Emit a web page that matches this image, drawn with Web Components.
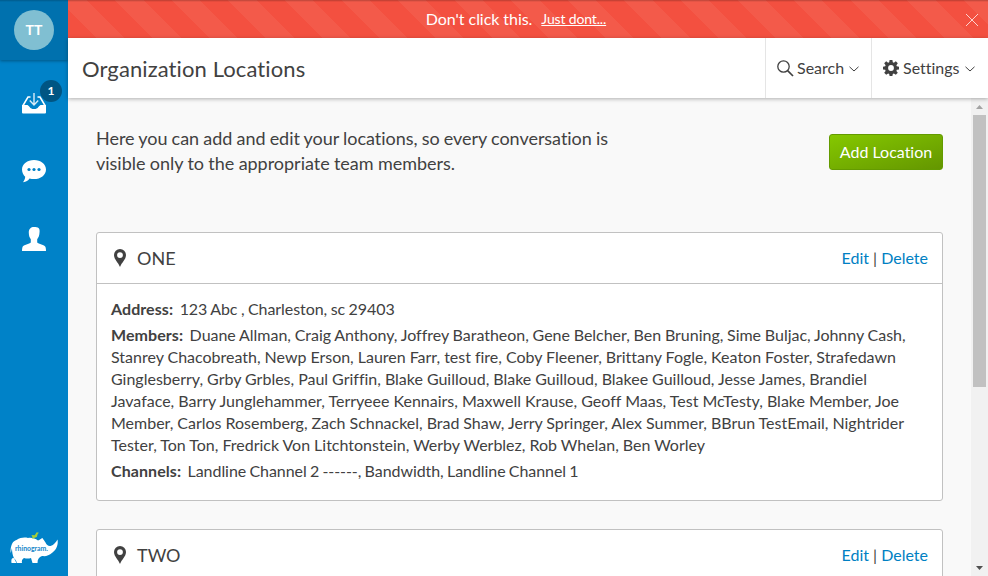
<!DOCTYPE html>
<html lang="en">
<head>
<meta charset="utf-8">
<title>Organization Locations</title>
<style>
html,body{margin:0;height:100%;overflow:hidden}
body{font-family:Lato,"Liberation Sans",sans-serif;color:#414141;font-size:16px;font-variant-ligatures:none}
</style>
</head>
<body>
<app-shell>
  <side-nav slot="nav" initials="TT"></side-nav>
  <alert-banner slot="banner">Don't click this.<a slot="link">Just dont...</a></alert-banner>
  <page-header slot="header" heading="Organization Locations">
    <header-action label="Search" icon="search"></header-action>
    <header-action label="Settings" icon="gear"></header-action>
  </page-header>
  <page-intro><text-line width="512">Here you can add and edit your locations, so every conversation is</text-line><text-line width="359">visible only to the appropriate team members.</text-line></page-intro>
  <location-card name="ONE">
    <detail-row label="Address:"><text-line width="215">123 Abc , Charleston, sc 29403</text-line></detail-row>
    <detail-row label="Members:"><text-line width="716">Duane Allman, Craig Anthony, Joffrey Baratheon, Gene Belcher, Ben Bruning, Sime Buljac, Johnny Cash,</text-line><br><text-line width="785">Stanrey Chacobreath, Newp Erson, Lauren Farr, test fire, Coby Fleener, Brittany Fogle, Keaton Foster, Strafedawn</text-line><br><text-line width="756">Ginglesberry, Grby Grbles, Paul Griffin, Blake Guilloud, Blake Guilloud, Blakee Guilloud, Jesse James, Brandiel</text-line><br><text-line width="788">Javaface, Barry Junglehammer, Terryeee Kennairs, Maxwell Krause, Geoff Maas, Test McTesty, Blake Member, Joe</text-line><br><text-line width="793">Member, Carlos Rosemberg, Zach Schnackel, Brad Shaw, Jerry Springer, Alex Summer, BBrun TestEmail, Nightrider</text-line><br><text-line width="594">Tester, Ton Ton, Fredrick Von Litchtonstein, Werby Werblez, Rob Whelan, Ben Worley</text-line></detail-row>
    <detail-row label="Channels:"><text-line width="391">Landline Channel 2 ------, Bandwidth, Landline Channel 1</text-line></detail-row>
  </location-card>
  <location-card name="TWO"></location-card>
</app-shell>
<script>
const define = (tag, html) => customElements.define(tag, class extends HTMLElement {
  constructor() {
    super();
    this.attachShadow({ mode: 'open' }).innerHTML = typeof html === 'function' ? html(this) : html;
  }
});

const icons = {
  search: `<svg width="17" height="17" viewBox="0 0 17 17" fill="none" stroke="#414141"><circle cx="6.5" cy="6.5" r="5.7" stroke-width="1.3"/><path d="M10.6 10.6L16 16" stroke-width="1.7"/></svg>`,
  gear: `<svg width="16" height="16" viewBox="0 0 16 16"><path fill="#414141" fill-rule="evenodd" d="M6.6 0h2.800l.4 2.200 1.100.5 1.900-1.400 2 2-1.400 1.900.4 1.100 2.200.4v2.700l-2.200.4-.4 1.100 1.400 1.900-2 2-1.900-1.400-1.100.5-.4 2.100H6.600l-.4-2.100-1.100-.5-1.900 1.400-2-2 1.400-1.900-.4-1.100L0 9.400V6.700l2.200-.4.4-1.100-1.400-1.900 2-2 1.900 1.400 1.100-.5zM8 5.100a2.900 2.900 0 1 0 0 5.800a2.900 2.900 0 1 0 0-5.800z"/></svg>`
};

define('scroll-rail', `
<style>
:host{display:flex;flex-direction:column;align-items:center;width:17px;background:#f1f1f1}
.arrow{height:17px;display:flex;align-items:center}
.thumb{width:13px;height:272px;background:#c1c1c1}
.space{flex:1}
svg{display:block}
</style>
<div class="arrow"><svg width="7" height="4"><path d="M0 4L3.5 0L7 4z" fill="#a3a3a3"/></svg></div>
<div class="thumb"></div><div class="space"></div>
<div class="arrow"><svg width="7" height="4"><path d="M0 0L3.5 4L7 0z" fill="#505050"/></svg></div>`);

define('app-shell', `
<style>
:host{display:grid;grid-template-columns:68px 920px;width:988px;height:576px;overflow:hidden}
.main{display:grid;grid-template-rows:38px 60px 478px;min-width:0}
.header{display:grid;z-index:1}
.view{display:grid;grid-template-columns:903px 17px;background:#f9f9f9;overflow:hidden}
.content{padding:28px 28px 0;overflow:hidden}
</style>
<slot name="nav"></slot>
<div class="main"><slot name="banner"></slot><div class="header"><slot name="header"></slot></div>
<div class="view"><div class="content"><slot></slot></div><scroll-rail></scroll-rail></div></div>`);

define('side-nav', el => `
<style>
:host{display:flex;flex-direction:column;background:#0082c8;height:576px}
.user{height:60px;background:linear-gradient(rgba(0,0,0,.2),rgba(0,0,0,0) 2px),#0071ae;box-shadow:0 1px 3px rgba(0,0,0,.35);display:flex;justify-content:center;align-items:center;box-sizing:border-box}
.avatar{width:40px;height:40px;border-radius:50%;background:#80bfd2;color:#fff;font-size:14px;font-weight:bold;line-height:39px;text-align:center}
.item{box-sizing:border-box;height:68px;display:flex;justify-content:center;position:relative}
.inbox{padding-top:33px}
.chat{padding-top:32px}
.people{padding-top:31px}
.badge{position:absolute;left:40px;top:20px;width:22px;height:22px;border-radius:50%;background:#005583;color:#fff;font-size:12px;font-weight:bold;line-height:22px;text-align:center}
.logo{margin-top:auto;padding:0 0 11px 9px}
svg{display:block}
</style>
<div class="user"><div class="avatar">${el.getAttribute('initials')}</div></div>
<div class="item inbox"><svg width="24" height="21" viewBox="0 0 24 21"><path d="M8.500 4H6L1 12.500M15.500 4H18L23 12.500" fill="none" stroke="#fff" stroke-width="1.500"/><path d="M0 12h5.500l1.500 1.300q1.500 2.700 3.500 2.700h3q2 0 3.500-2.700l1.500-1.300H24v7.500q0 1-1 1H1q-1 0-1-1z" fill="#fff"/><path d="M12 0v11.500M7.800 7.500L12 12l4.200-4.500" fill="none" stroke="#fff" stroke-opacity=".85" stroke-width="1.400"/></svg><span class="badge">1</span></div>
<div class="item chat"><svg width="24" height="23" viewBox="0 0 24 23"><path d="M12 0C5.400 0 0 4 0 9.500c0 3.400 1.600 5.800 3.200 7.300-.2 2.400-1 4-2.200 5.400 3.200-.2 5.200-1.600 6.500-3.600 1.400.4 2.900.5 4.500.5 6.600 0 12-4 12-9.600S18.600 0 12 0z" fill="#fff"/><g fill="#0082c8"><circle cx="7" cy="9.500" r="1.600"/><circle cx="12" cy="9.500" r="1.600"/><circle cx="17" cy="9.500" r="1.600"/></g></svg></div>
<div class="item people"><svg width="24" height="24" viewBox="0 0 24 24"><path d="M12 0c4 0 6.300 1 5.500 5.800-.2 3-.9 4.700-2.300 6.400v3.300c1.200 1.700 7.500 2 8.300 4.500.4 1.200.5 2.500.5 4H0c0-1.500.1-2.800.5-4 .8-2.500 7.100-2.800 8.300-4.500v-3.300C7.400 10.500 6.900 8.800 6.800 5.800 6.600 1.800 9 0 12 0z" fill="#fff"/></svg></div>
<div class="logo"><svg width="50" height="34" viewBox="0 0 50 34"><path d="M1.500 20C2 13 4 10 7.500 9c4-2.500 8-3 11.500-2 4-.5 7 .5 10 2.500 1.800-.2 3-2 4.500-2.500.5 1.500 2 2.500 3 4.500 1 2.500 3 4 5 3.500 3.500-1 5.500-4 7-6.500 1 5-1 10-5 13-4 3.500-7 4-10.500 3.500-3 1-4.500 3-4.500 7h-5l-1.500-5c-3 1-5 .5-7 0-2 1-2.500 3-2 5h-5c-1-3-2.500-5-4-5s-2 2.500-1.500 5H7.500c-2-4-4.500-7-4.500-15L1.800 22z" fill="#fff"/><path d="M22.500 4l3.200.2 2-3L30 1.700l-1.300 1.200-.9 3-2.800 1-1.500 1-.2-2z" fill="#a4ce39"/><text x="6" y="19.500" font-size="7.500" font-weight="bold" textLength="33" lengthAdjust="spacingAndGlyphs" fill="#1686c9" font-family="Lato">rhinogram.</text></svg></div>`);

define('alert-banner', `
<style>
:host{display:grid;grid-template-columns:32px 1fr 23px;align-items:center;height:38px;color:#fff;background:linear-gradient(rgba(0,0,0,.24),rgba(0,0,0,0) 2px),repeating-linear-gradient(45deg,#f35040 0 20px,#f35a4a 20px 40px)}
p{grid-column:2;margin:0;padding-right:33px;text-align:center;line-height:38px;letter-spacing:-.05px}
::slotted(a){font-size:14px;text-decoration:underline;margin-left:9px;letter-spacing:-.15px;position:relative;top:-1px}
svg{display:block}
</style>
<p><slot></slot><slot name="link"></slot></p><svg width="14" height="14" viewBox="0 0 14 14"><path d="M1 1l12 12M13 1L1 13" stroke="#fff" stroke-opacity=".75"/></svg>`);

define('page-header', el => `
<style>
:host{display:flex;background:#fff;height:60px;box-shadow:0 1px 4px rgba(0,0,0,.3)}
h1{font-size:22px;font-weight:400;line-height:62px;margin:0 auto 0 14px;letter-spacing:.1px}
</style>
<h1>${el.getAttribute('heading')}</h1><slot></slot>`);

define('header-action', el => `
<style>
:host{display:flex;align-items:center;box-sizing:border-box;border-left:1px solid #e5e5e5;padding:0 12px 0 11px}
:host([icon=search]){width:106px}
:host([icon=gear]){width:117px}
span{margin:0 auto 0 4px;line-height:60px}
:host([icon=search]) span{margin-left:3px}
svg{display:block;flex:none}
.chevron{margin-top:2px}
:host([icon=gear]) .chevron{margin-right:1px}
</style>
${icons[el.getAttribute('icon')]}<span>${el.getAttribute('label')}</span><svg class="chevron" width="10" height="6" viewBox="0 0 10 6"><path d="M.5 .8L5 5L9.500 .8" fill="none" stroke="#414141"/></svg>`);

define('page-intro', `
<style>
:host{display:flex;justify-content:space-between;align-items:flex-start;height:106px}
p{font-size:18px;line-height:25px;margin:0;display:flex;flex-direction:column}
button{font:inherit;color:#fff;height:36px;width:114px;padding:0 0 2px;margin-top:8px;border:1px solid #649b00;border-radius:3px;background:linear-gradient(to bottom right,#85c800,#649600)}
</style>
<p><slot></slot></p><button>Add Location</button>`);

define('location-card', el => `
<style>
:host{display:block;box-sizing:border-box;height:269px;border:1px solid #c1c1c1;border-radius:3px;background:#fff;margin-bottom:28px}
header{display:flex;align-items:center;height:50px;border-bottom:1px solid #c1c1c1;padding:0 14px 0 17px}
h2{font-size:18px;font-weight:400;line-height:50px;margin:0 auto 0 11px}
a{color:#0080c3}
.links{white-space:pre;padding-bottom:2px}
.body{padding:14px 14px 0}
svg{display:block}
</style>
<header><svg width="12" height="18" viewBox="0 0 12 18"><path fill="#414141" fill-rule="evenodd" d="M6 0a6 6 0 0 0-6 6c0 4.500 4.300 7.500 6 12 1.700-4.500 6-7.500 6-12a6 6 0 0 0-6-6zM6 3.200a2.900 2.900 0 1 1 0 5.800a2.900 2.900 0 1 1 0-5.800z"/></svg><h2>${el.getAttribute('name')}</h2><div class="links"><a>Edit</a> | <a>Delete</a></div></header>
<div class="body"><slot></slot></div>`);

define('detail-row', el => `
<style>
:host{display:block;line-height:22px;margin-bottom:4px;white-space:nowrap}
b{margin-right:6.5px;letter-spacing:.07px}
</style>
<b>${el.getAttribute('label')}</b><slot></slot>`);

/* A single line whose word gaps are adjusted so that it fills the given measure. */
customElements.define('text-line', class extends HTMLElement {
  constructor() {
    super();
    this.attachShadow({ mode: 'open' }).innerHTML = '<style>:host{display:inline-block;white-space:nowrap;align-self:flex-start}</style><slot></slot>';
  }
  connectedCallback() {
    const spare = this.getAttribute('width') - this.getBoundingClientRect().width;
    const gaps = this.textContent.split(' ').length - 1;
    this.style.wordSpacing = `${(spare * .6 / gaps).toFixed(3)}px`;
    this.style.letterSpacing = `${(spare * .4 / this.textContent.length).toFixed(3)}px`;
  }
});
</script>
</body>
</html>
